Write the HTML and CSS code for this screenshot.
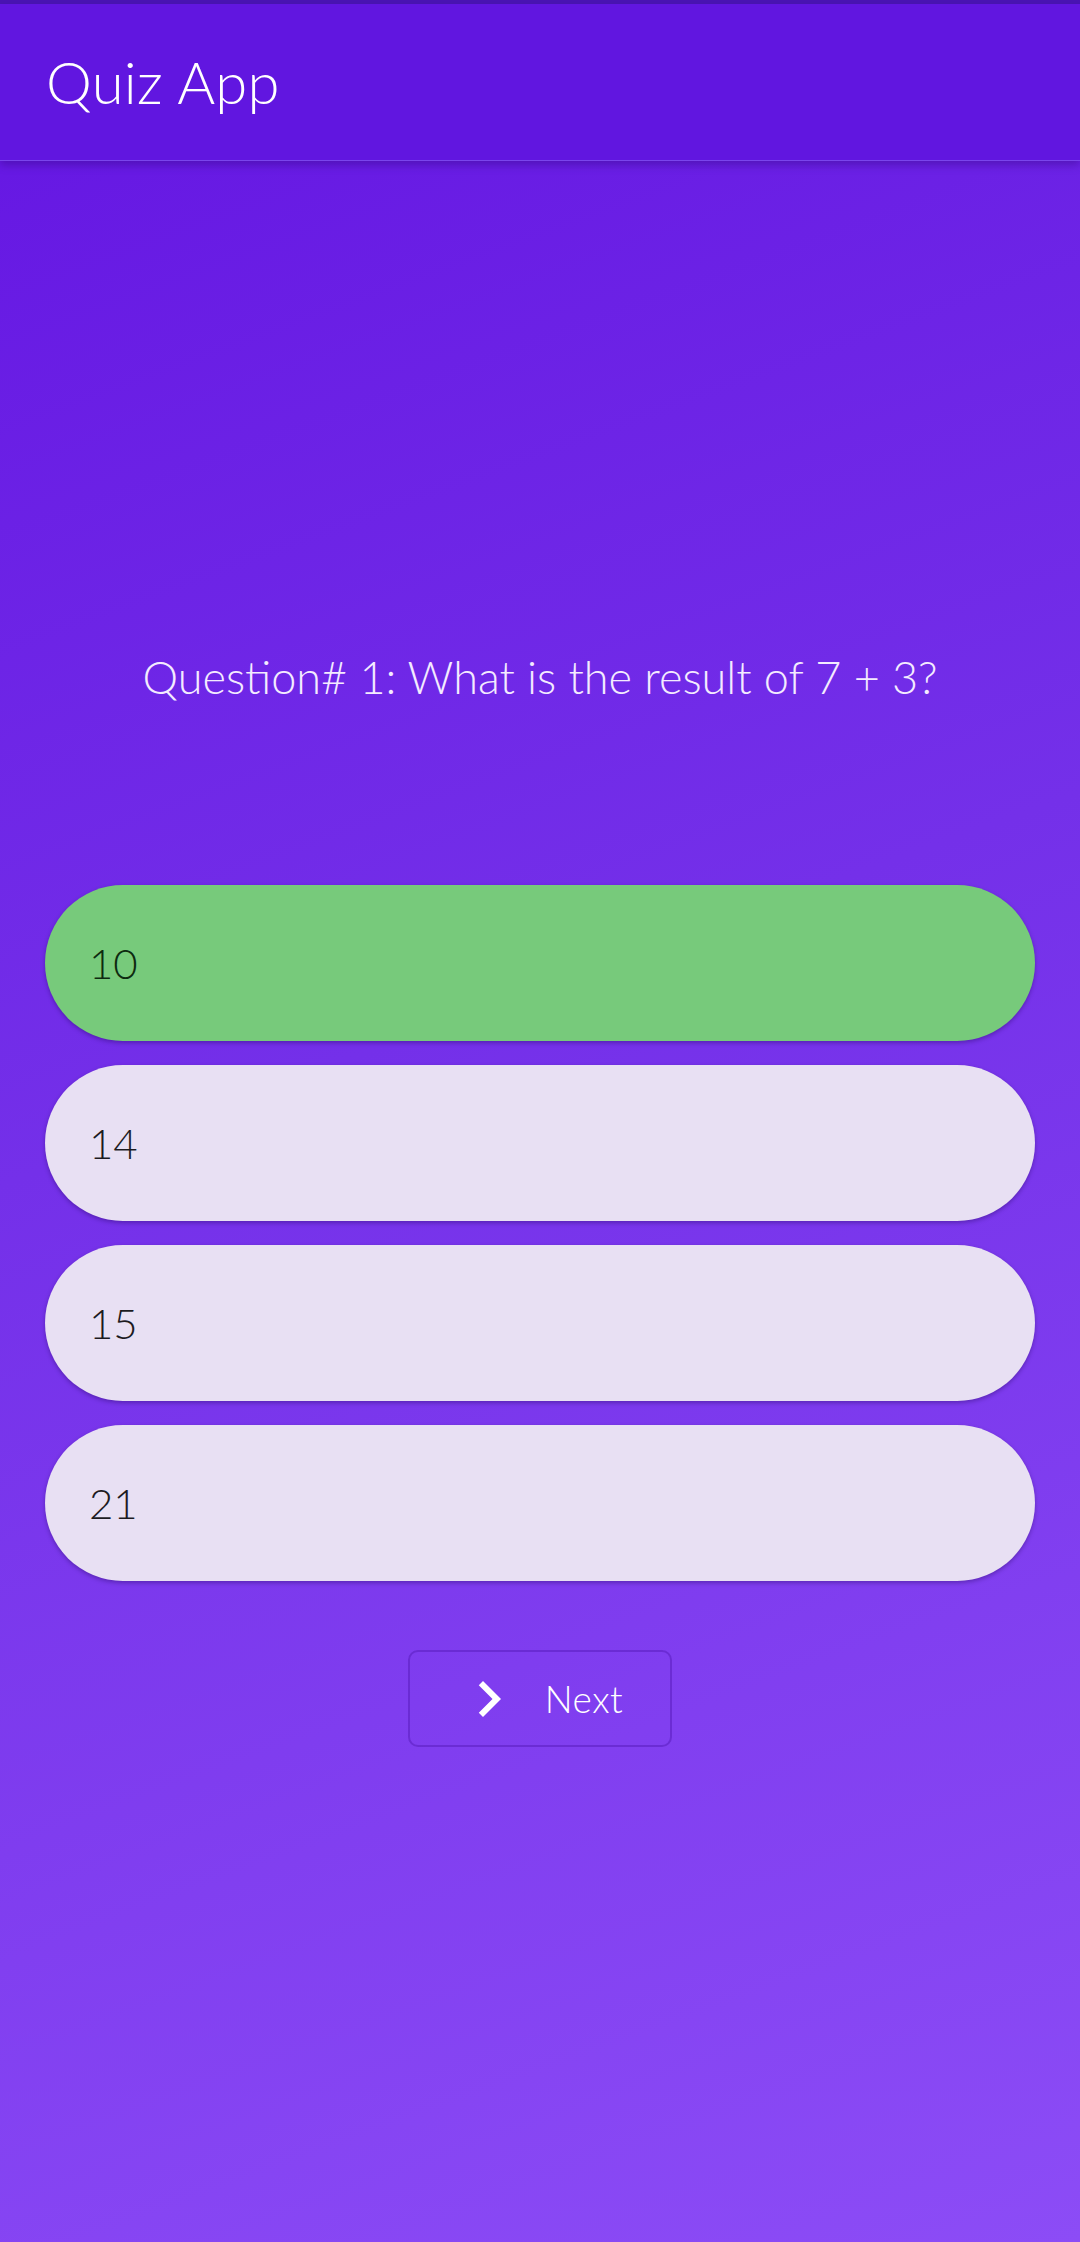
FILE: index.html
```html
<!DOCTYPE html>
<html lang="en">
<head>
<meta charset="utf-8">
<title>Quiz App</title>
<link rel="stylesheet" href="styles.css">
</head>
<body>
<div class="statusbar"></div>
<header class="appbar">
  <h1 class="title">Quiz App</h1>
</header>
<main class="content">
  <p class="question">Question# 1: What is the result of 7 + 3?</p>
  <div class="options">
    <div class="option option-correct">10</div>
    <div class="option">14</div>
    <div class="option">15</div>
    <div class="option">21</div>
  </div>
  <div class="actions">
    <button class="next-btn" type="button">
      <svg class="chevron" viewBox="0 0 24 24" width="72" height="72" aria-hidden="true"><path d="M10 6L8.59 7.41 13.17 12l-4.58 4.59L10 18l6-6z" fill="#ffffff"/></svg>
      <span class="next-label">Next</span>
    </button>
  </div>
</main>
</body>
</html>
```
FILE: styles.css
```css
html, body {
  margin: 0;
  padding: 0;
}
body {
  width: 1080px;
  height: 2242px;
  overflow: hidden;
  font-family: "Lato", "Open Sans", sans-serif;
  background: linear-gradient(160deg, #6415e2 0%, #7430e9 45%, #8c4cf6 100%);
}
.statusbar {
  height: 4px;
  background: #4a14b4;
}
.appbar {
  height: 156px;
  display: flex;
  align-items: center;
  padding: 0 46px;
  background: #6116e0;
  border-bottom: 1px solid #7a45ec;
  box-shadow: 0 4px 8px rgba(40, 0, 110, 0.35);
  position: relative;
}
.title {
  margin: 0;
  margin-top: -2px;
  font-weight: 300;
  font-size: 58px;
  color: #ffffff;
  letter-spacing: 0.3px;
}
.content {
  padding: 0 45px;
}
.question {
  margin: 488px 0 0;
  height: 56px;
  line-height: 56px;
  font-size: 45px;
  font-weight: 300;
  text-align: center;
  color: #f4ebff;
  letter-spacing: 0;
}
.options {
  margin-top: 180px;
  display: flex;
  flex-direction: column;
  gap: 24px;
}
.option {
  height: 156px;
  border-radius: 78px;
  background: #e8e0f3;
  display: flex;
  align-items: center;
  padding-left: 44px;
  font-size: 42px;
  font-weight: 300;
  color: #1c1b1f;
  box-shadow: 0 2px 4px rgba(30, 0, 80, 0.35);
}
.option-correct {
  background: #77ca7b;
  color: #0e2a10;
}
.actions {
  display: flex;
  justify-content: center;
  margin-top: 69px;
}
.next-btn {
  width: 264px;
  height: 97px;
  box-sizing: border-box;
  border: 2px solid rgba(90, 30, 190, 0.55);
  border-radius: 10px;
  background: transparent;
  display: flex;
  align-items: center;
  justify-content: center;
  gap: 20px;
  padding: 0 4px 0 0;
  font-family: inherit;
  cursor: pointer;
}
.chevron {
  display: block;
  flex: none;
}
.next-label {
  font-size: 37px;
  font-weight: 300;
  color: #ffffff;
  letter-spacing: 0.5px;
}
```
